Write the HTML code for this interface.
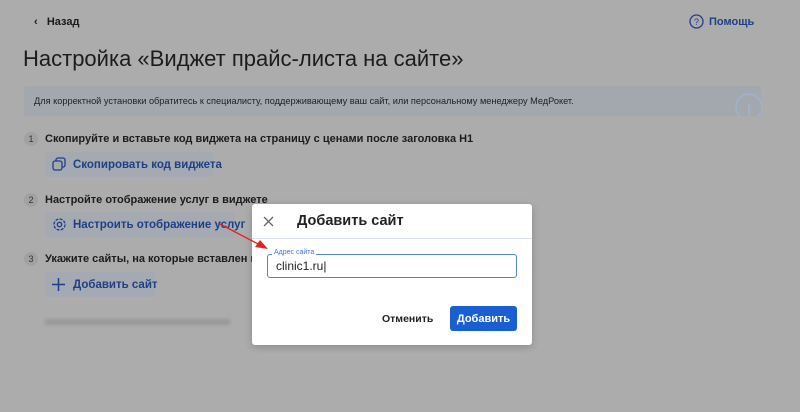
<!DOCTYPE html>
<html><head><meta charset="utf-8"><style>
*{margin:0;padding:0;box-sizing:border-box}
body{width:800px;height:412px;background:#acacac;font-family:"Liberation Sans",sans-serif;position:relative;overflow:hidden;color:#1a1a1a}
.a{position:absolute;white-space:nowrap}
.btn{position:absolute;white-space:nowrap;background:#a4a9b2;border-radius:3px;color:#1f3f86;font-size:11.5px;font-weight:bold;height:25px;line-height:27px;padding-left:28px}
.num{position:absolute;width:14px;height:14px;border-radius:7px;background:#a1a1a1;font-size:9px;line-height:14px;text-align:center;color:#333}
.st{font-size:11px;font-weight:bold;color:#1c1c1c}
</style></head><body>
<div class="a" style="left:34px;top:16px;font-size:11px;font-weight:bold">‹&nbsp;&nbsp; Назад</div>
<svg class="a" style="left:689px;top:14px" width="15" height="15"><circle cx="7.5" cy="7.5" r="6.5" fill="none" stroke="#1f3f86" stroke-width="1.3"/><text x="7.5" y="11" font-size="9" text-anchor="middle" fill="#1f3f86" font-family="Liberation Sans">?</text></svg>
<div class="a" style="left:709px;top:16px;font-size:11px;font-weight:bold;color:#1f3f86">Помощь</div>
<div class="a" style="left:23px;top:46px;font-size:22px;color:#1c1c1c">Настройка «Виджет прайс-листа на сайте»</div>
<div class="a" style="left:24px;top:86px;width:737px;height:30px;background:#a3a7ae;border-radius:2px"></div>
<div class="a" style="left:34px;top:96px;font-size:9.2px;color:#222">Для корректной установки обратитесь к специалисту, поддерживающему ваш сайт, или персональному менеджеру МедРокет.</div>
<svg class="a" style="left:732px;top:90px" width="30" height="26"><circle cx="17" cy="17" r="13" fill="none" stroke="#9fb0c8" stroke-width="2"/><rect x="16" y="13" width="2" height="12" fill="#9fb0c8"/></svg>
<div class="num" style="left:24px;top:132px">1</div>
<div class="a st" style="left:45px;top:133px">Скопируйте и вставьте код виджета на страницу с ценами после заголовка H1</div>
<div class="btn" style="left:45px;top:152px;width:168px">Скопировать код виджета</div>
<svg class="a" style="left:52px;top:157px" width="14" height="14"><rect x="4" y="1" width="9" height="9" rx="2" fill="none" stroke="#1f3f86" stroke-width="1.3"/><rect x="1" y="4" width="9" height="9" rx="2" fill="#a4a9b2" stroke="#1f3f86" stroke-width="1.3"/></svg>
<div class="num" style="left:24px;top:193px">2</div>
<div class="a st" style="left:45px;top:194px">Настройте отображение услуг в виджете</div>
<div class="btn" style="left:45px;top:212px;width:190px">Настроить отображение услуг</div>
<svg class="a" style="left:52px;top:217px" width="15" height="15"><circle cx="7.5" cy="7.5" r="2.2" fill="none" stroke="#1f3f86" stroke-width="1.3"/><circle cx="7.5" cy="7.5" r="5.5" fill="none" stroke="#1f3f86" stroke-width="1.3" stroke-dasharray="3 1.3"/></svg>
<div class="num" style="left:24px;top:252px">3</div>
<div class="a st" style="left:45px;top:253px">Укажите сайты, на которые вставлен код</div>
<div class="btn" style="left:45px;top:272px;width:110px">Добавить сайт</div>
<svg class="a" style="left:52px;top:278px" width="13" height="13"><path d="M6.5 0V13M0 6.5H13" stroke="#1f3f86" stroke-width="1.5"/></svg>
<div class="a" style="left:45px;top:319px;width:185px;height:6px;background:#999;filter:blur(1.5px)"></div>
<div class="a" style="left:252px;top:204px;width:280px;height:141px;background:#fff;border-radius:3px;box-shadow:0 2px 8px rgba(0,0,0,.2)"></div>
<svg class="a" style="left:263px;top:216px" width="11" height="11"><path d="M1 1L10 10M10 1L1 10" stroke="#666" stroke-width="1.3"/></svg>
<div class="a" style="left:297px;top:213px;font-size:14.5px;font-weight:bold;color:#222">Добавить сайт</div>
<div class="a" style="left:252px;top:238px;width:280px;height:1px;background:#dde3ec"></div>
<div class="a" style="left:267px;top:254px;width:250px;height:24px;border:1px solid #5b82cc;border-radius:3px"></div>
<div class="a" style="left:272px;top:249px;font-size:7px;color:#4a72c8;background:#fff;padding:0 2px">Адрес сайта</div>
<div class="a" style="left:276px;top:259px;font-size:12px;color:#222">clinic1.ru|</div>
<div class="a" style="left:382px;top:313px;font-size:10.5px;font-weight:bold;color:#222">Отменить</div>
<div class="a" style="left:450px;top:306px;width:67px;height:25px;background:#1a5fd1;border-radius:3px;color:#fff;font-size:11px;font-weight:bold;text-align:center;line-height:26px">Добавить</div>
<svg class="a" style="left:0;top:0" width="800" height="412"><line x1="218" y1="223" x2="262" y2="246" stroke="#e8201a" stroke-width="1.3"/><polygon points="268,249 255,247 260,240" fill="#e8201a"/></svg>
</body></html>
